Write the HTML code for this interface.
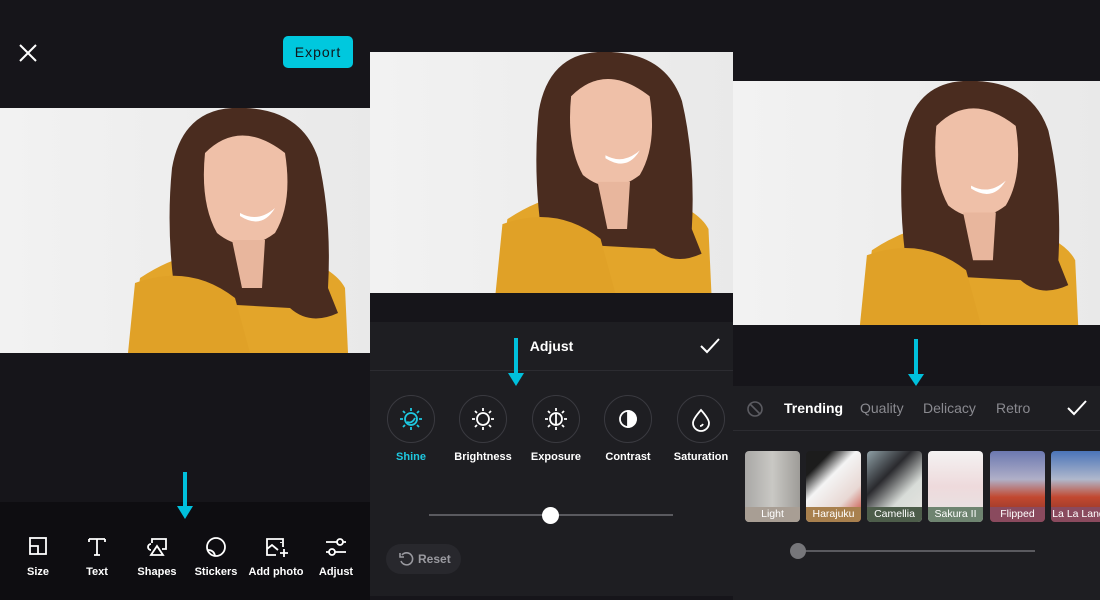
<!DOCTYPE html>
<html><head><meta charset="utf-8"><style>
*{margin:0;padding:0;box-sizing:border-box}
body{width:1100px;height:600px;overflow:hidden;background:#16151a;font-family:"Liberation Sans",sans-serif;position:relative}
.a{position:absolute}
.lbl{position:absolute;color:#fff;font-size:11px;font-weight:bold;text-align:center;width:70px}
.circ{position:absolute;width:48px;height:48px;border-radius:50%;border:1px solid #3a3a40}
.thumb{position:absolute;width:55px;height:71px;border-radius:4px;overflow:hidden}
.thumb span{position:absolute;bottom:0;left:0;right:0;height:15px;color:#fff;font-size:10.5px;text-align:center;line-height:15px}
</style></head><body>
<svg width="0" height="0" style="position:absolute"><defs>
<linearGradient id="bg" x1="0" x2="1"><stop offset="0" stop-color="#f2f2f2"/><stop offset="1" stop-color="#e9e9e9"/></linearGradient>
<g id="ph">
<rect width="370" height="245" fill="url(#bg)"/>
<path d="M130 245 L140 170 Q170 150 200 145 L290 145 Q335 160 345 180 L348 245 Z" fill="#e3a52a"/>
<path d="M178 205 Q165 130 172 60 Q182 3 232 0 Q300 -3 318 50 Q332 110 328 180 L338 205 Q310 218 290 200 L200 195 Q190 210 178 205 Z" fill="#4a2c1f"/>
<path d="M205 45 Q240 10 285 45 Q293 95 275 125 Q245 148 217 125 Q200 95 205 45 Z" fill="#efc0a8"/>
<path d="M232 132 L265 132 L262 180 L242 180 Z" fill="#e8b69d"/>
<path d="M240 105 Q258 115 275 100 Q262 122 240 108 Z" fill="#fff"/>
<path d="M135 175 Q190 155 235 190 L250 245 L128 245 Z" fill="#e0a127"/>
</g></defs></svg>

<!-- Panel 1 -->
<div class="a" style="left:0;top:0;width:370px;height:600px;background:#16151a"></div>
<svg class="a" style="left:18px;top:43px" width="20" height="20"><path d="M2 2L18 18M18 2L2 18" stroke="#fff" stroke-width="2"/></svg>
<div class="a" style="left:283px;top:36px;width:70px;height:32px;background:#00c8de;border-radius:5px;color:#10161a;font-size:14px;text-align:center;line-height:32px;letter-spacing:1px">Export</div>
<svg class="a" style="left:0;top:108px" width="370" height="245" viewBox="0 0 370 245"><use href="#ph"/></svg>
<div class="a" style="left:0;top:502px;width:370px;height:98px;background:#0e0d11"></div>
<div class="a" style="left:183px;top:472px;width:4px;height:38px;background:#00c0dc"></div>
<div class="a" style="left:177px;top:506px;border-left:8px solid transparent;border-right:8px solid transparent;border-top:13px solid #00c0dc"></div>
<svg class="a" style="left:0;top:535px" width="370" height="25" fill="none" stroke="#fff" stroke-width="1.8">
<rect x="30" y="3" width="16" height="16"/><path d="M30 11h8v8"/>
<path d="M89 4h16M97 4v16M89 4v3M105 4v3M94 20h6"/>
<path d="M152 8v-4h14v10h-4M151 9a3 3 0 0 0 0 6M157 11l6 9h-12z"/>
<circle cx="216" cy="12" r="9"/><path d="M208 15q6 0 7 6"/>
<path d="M276 20h-9V4h16v8M267 14l5-4 6 5M281 7v1M280 18h8M284 14v8"/>
<path d="M326 7h20M326 17h20"/><circle cx="340" cy="7" r="3" fill="#0e0d11"/><circle cx="332" cy="17" r="3" fill="#0e0d11"/>
</svg>
<div class="lbl" style="left:3px;top:566px">Size</div>
<div class="lbl" style="left:62px;top:566px">Text</div>
<div class="lbl" style="left:122px;top:566px">Shapes</div>
<div class="lbl" style="left:181px;top:566px">Stickers</div>
<div class="lbl" style="left:241px;top:566px">Add photo</div>
<div class="lbl" style="left:301px;top:566px">Adjust</div>

<!-- Panel 2 -->
<div class="a" style="left:370px;top:0;width:363px;height:600px;background:#16151a"></div>
<svg class="a" style="left:370px;top:52px" width="363" height="241" viewBox="0 0 370 245" preserveAspectRatio="none"><use href="#ph"/></svg>
<div class="a" style="left:370px;top:322px;width:363px;height:274px;background:#1e1e22"></div>
<div class="a" style="left:370px;top:370px;width:363px;height:1px;background:#2c2c31"></div>
<div class="a" style="left:370px;top:338px;width:363px;text-align:center;color:#fff;font-weight:bold;font-size:14px">Adjust</div>
<svg class="a" style="left:699px;top:337px" width="22" height="18"><path d="M2 9l6 6L20 2" stroke="#fff" stroke-width="2" fill="none"/></svg>
<div class="a" style="left:514px;top:338px;width:4px;height:38px;background:#00c0dc"></div>
<div class="a" style="left:508px;top:373px;border-left:8px solid transparent;border-right:8px solid transparent;border-top:13px solid #00c0dc"></div>
<div class="circ" style="left:387px;top:395px"></div>
<div class="circ" style="left:459px;top:395px"></div>
<div class="circ" style="left:532px;top:395px"></div>
<div class="circ" style="left:604px;top:395px"></div>
<div class="circ" style="left:677px;top:395px"></div>
<svg class="a" style="left:370px;top:404px" width="363" height="30" fill="none" stroke-width="1.8">
<g stroke="#1ec8e0"><circle cx="41" cy="15" r="6"/><path d="M41 4v3M41 23v3M30 15h3M49 15h3M33 7l2 2M47 21l2 2M33 23l2-2M47 9l2-2M37 18q5 2 8-4"/></g>
<g stroke="#fff"><circle cx="113" cy="15" r="6"/><path d="M113 4v3M113 23v3M102 15h3M121 15h3M105 7l2 2M119 21l2 2M105 23l2-2M119 9l2-2"/>
<circle cx="186" cy="15" r="6"/><path d="M186 9v12M186 4v3M186 23v3M175 15h3M194 15h3M178 7l2 2M192 21l2 2M178 23l2-2M192 9l2-2"/>
<circle cx="258" cy="15" r="8"/><path d="M258 7a8 8 0 0 1 0 16z" fill="#fff"/>
<path d="M331 6q-8 9-8 13a8 8 0 0 0 16 0q0-4-8-13z"/><path d="M333 20q-1 2-3 2"/></g>
</svg>
<div class="lbl" style="left:376px;top:451px;color:#1ec8e0">Shine</div>
<div class="lbl" style="left:448px;top:451px">Brightness</div>
<div class="lbl" style="left:521px;top:451px">Exposure</div>
<div class="lbl" style="left:593px;top:451px">Contrast</div>
<div class="lbl" style="left:666px;top:451px">Saturation</div>
<div class="a" style="left:429px;top:514px;width:244px;height:2px;background:#5a5a5f"></div>
<div class="a" style="left:542px;top:507px;width:17px;height:17px;border-radius:50%;background:#fff"></div>
<div class="a" style="left:386px;top:544px;width:75px;height:30px;border-radius:15px;background:#28282d"></div>
<svg class="a" style="left:398px;top:551px" width="16" height="16"><path d="M4 4a6 6 0 1 1-1 6" stroke="#9a9aa0" stroke-width="1.6" fill="none"/><path d="M2 2v4h4" stroke="#9a9aa0" stroke-width="1.6" fill="none"/></svg>
<div class="a" style="left:418px;top:552px;color:#9a9aa0;font-size:12px;font-weight:bold">Reset</div>

<!-- Panel 3 -->
<div class="a" style="left:733px;top:0;width:367px;height:600px;background:#16151a"></div>
<svg class="a" style="left:733px;top:81px" width="367" height="244" viewBox="0 0 370 245" preserveAspectRatio="none"><use href="#ph"/></svg>
<div class="a" style="left:733px;top:386px;width:367px;height:214px;background:#1e1e22"></div>
<div class="a" style="left:733px;top:430px;width:367px;height:1px;background:#2c2c31"></div>
<div class="a" style="left:914px;top:339px;width:4px;height:38px;background:#00c0dc"></div>
<div class="a" style="left:908px;top:374px;border-left:8px solid transparent;border-right:8px solid transparent;border-top:12px solid #00c0dc"></div>
<svg class="a" style="left:746px;top:400px" width="18" height="18" fill="none" stroke="#5c5c62" stroke-width="1.6"><circle cx="9" cy="9" r="7"/><path d="M4 4l10 10"/></svg>
<div class="a" style="left:784px;top:400px;color:#fff;font-weight:bold;font-size:14px">Trending</div>
<div class="a" style="left:860px;top:400px;color:#8a8a90;font-size:14px">Quality</div>
<div class="a" style="left:923px;top:400px;color:#8a8a90;font-size:14px">Delicacy</div>
<div class="a" style="left:996px;top:400px;color:#8a8a90;font-size:14px">Retro</div>
<svg class="a" style="left:1066px;top:399px" width="22" height="18"><path d="M2 9l6 6L20 2" stroke="#fff" stroke-width="2" fill="none"/></svg>
<div class="thumb" style="left:745px;top:451px;background:linear-gradient(90deg,#a9a8a6,#c9c8c4 50%,#9e9c98)"><span style="background:#a89e94">Light</span></div>
<div class="thumb" style="left:806px;top:451px;background:linear-gradient(135deg,#1c1c1c 20%,#f4f4f4 40%,#e8d8d4 70%,#c23020)"><span style="background:#a8804e">Harajuku</span></div>
<div class="thumb" style="left:867px;top:451px;background:linear-gradient(135deg,#8fa0a6,#2a2a2e 35%,#d8dcd8 65%,#e8e6e2)"><span style="background:#4d5d4a">Camellia</span></div>
<div class="thumb" style="left:928px;top:451px;background:linear-gradient(180deg,#f4f2f2,#eedadc 50%,#e6e4e4)"><span style="background:#6e8470">Sakura II</span></div>
<div class="thumb" style="left:990px;top:451px;background:linear-gradient(180deg,#6c78b0,#b0b0c8 40%,#c24830 65%,#803028)"><span style="background:#8a4a5e">Flipped</span></div>
<div class="thumb" style="left:1051px;top:451px;width:55px;background:linear-gradient(180deg,#4a74b8,#b0b8cc 40%,#c24830 65%,#803028)"><span style="background:#8a4a5e">La La Land</span></div>
<div class="a" style="left:798px;top:550px;width:237px;height:2px;background:#5a5a5f"></div>
<div class="a" style="left:790px;top:543px;width:16px;height:16px;border-radius:50%;background:#76767a"></div>
</body></html>
